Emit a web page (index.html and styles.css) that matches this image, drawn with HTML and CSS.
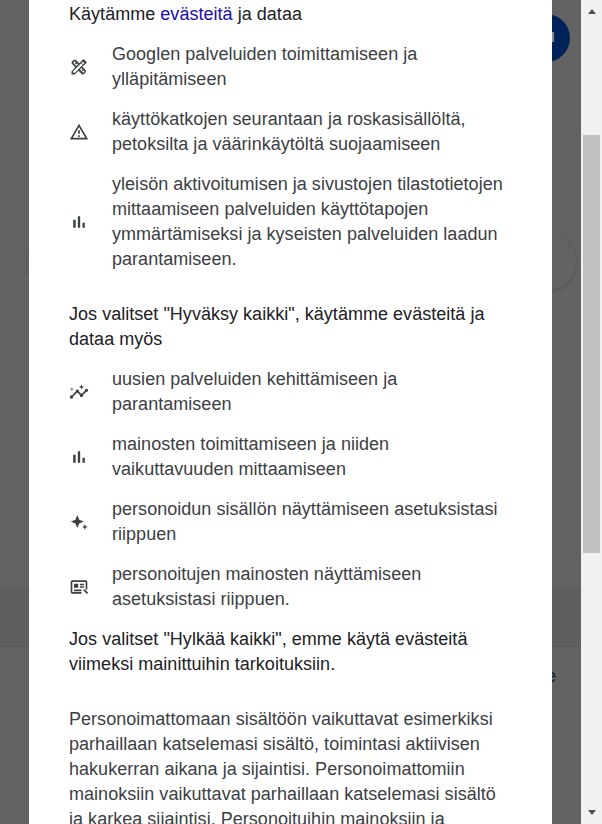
FILE: index.html
```html
<!DOCTYPE html>
<html lang="fi">
<head>
<meta charset="utf-8">
<title>Evästeet</title>
<link rel="stylesheet" href="styles.css">
</head>
<body>
<div class="page">
  <div class="backdrop">
    <div class="under">
      <div class="account"><span class="notch"></span></div>
      <div class="search"></div>
      <div class="band"></div>
      <div class="rule"></div>
      <span class="stray">e</span>
    </div>
    <main class="dialog">
      <p class="lead">Käytämme <a class="link" href="#">evästeitä</a> ja dataa</p>
      <ul class="list">
        <li class="item">
          <svg class="icon" viewBox="0 0 24 24"><path d="M20.97 7.27a1 1 0 0 0 0-1.41l-2.83-2.83a1 1 0 0 0-1.41 0l-4.49 4.49-3.89-3.89a2 2 0 0 0-2.83 0l-1.9 1.9a2 2 0 0 0 0 2.83l3.89 3.89L3 17.25V21h3.75l4.51-4.51 3.89 3.89c.95.95 2.23.6 2.83 0l1.9-1.9a2 2 0 0 0 0-2.83l-3.89-3.89zM5.04 6.94l1.89-1.9L8.2 6.31 7.02 7.5l1.41 1.41 1.19-1.19 1.2 1.2-1.9 1.9zm11.23 7.44-1.19 1.19 1.41 1.41 1.19-1.19 1.27 1.27-1.9 1.9-3.89-3.89 1.9-1.9zM6.92 19H5v-1.92l9.61-9.61 1.92 1.92zm9.61-13.57 1.92 1.92-1.41 1.41-1.92-1.92z"/></svg>
          <span>Googlen palveluiden toimittamiseen ja ylläpitämiseen</span>
        </li>
        <li class="item">
          <svg class="icon" viewBox="0 0 24 24"><path d="M12 5.99 19.53 19H4.47zM12 2 1 21h22zm1 14h-2v2h2zm0-6h-2v4h2z"/></svg>
          <span>käyttökatkojen seurantaan ja roskasisällöltä, petoksilta ja väärinkäytöltä suojaamiseen</span>
        </li>
        <li class="item">
          <svg class="icon" viewBox="0 0 24 24"><path d="M5 9.2h3V19H5zM10.6 5h2.8v14h-2.8zm5.6 8H19v6h-2.8z"/></svg>
          <span>yleisön aktivoitumisen ja sivustojen tilastotietojen mittaamiseen palveluiden käyttötapojen ymmärtämiseksi ja kyseisten palveluiden laadun parantamiseen.</span>
        </li>
      </ul>
      <p class="lead lead-gap">Jos valitset "Hyväksy kaikki", käytämme evästeitä ja dataa myös</p>
      <ul class="list">
        <li class="item">
          <svg class="icon" viewBox="0 0 24 24"><path d="M21 8c-1.45 0-2.26 1.44-1.93 2.51l-3.55 3.56c-.3-.09-.74-.09-1.04 0l-2.55-2.55C12.27 10.45 11.46 9 10 9c-1.45 0-2.27 1.44-1.93 2.52l-4.56 4.55C2.44 15.74 1 16.55 1 18c0 1.1.9 2 2 2 1.45 0 2.26-1.44 1.93-2.51l4.55-4.56c.3.09.74.09 1.04 0l2.55 2.55C12.73 16.55 13.54 18 15 18c1.45 0 2.27-1.44 1.93-2.52l3.56-3.55c1.07.33 2.51-.48 2.51-1.93 0-1.1-.9-2-2-2zM15 9l.94-2.07L18 6l-2.06-.93L15 3l-.92 2.07L12 6l2.08.93zM3.5 11 4 9l2-.5L4 8l-.5-2L3 8l-2 .5L3 9z"/></svg>
          <span>uusien palveluiden kehittämiseen ja parantamiseen</span>
        </li>
        <li class="item">
          <svg class="icon" viewBox="0 0 24 24"><path d="M5 9.2h3V19H5zM10.6 5h2.8v14h-2.8zm5.6 8H19v6h-2.8z"/></svg>
          <span>mainosten toimittamiseen ja niiden vaikuttavuuden mittaamiseen</span>
        </li>
        <li class="item">
          <svg class="icon" viewBox="0 0 24 24"><path d="m10 3.700 2.300 5.500 5.500 2.300-5.500 2.300-2.300 5.500-2.300-5.500-5.500-2.300 5.500-2.300zM19 14.500l1 2.500 2.500 1-2.500 1-1 2.500-1-2.500-2.500-1 2.500-1z"/></svg>
          <span>personoidun sisällön näyttämiseen asetuksistasi riippuen</span>
        </li>
        <li class="item">
          <svg class="icon" viewBox="0 0 24 24"><path d="M4 4h16a2 2 0 0 1 2 2v9h-2V6H4v12h11v2H4a2 2 0 0 1-2-2V6a2 2 0 0 1 2-2zm2 4h5v5H6zm7 0h5v2h-5zm0 3h5v2h-5zm-7 4h9v2H6zm12.500-.5 4.500 4.500-1.500 1.500-4.500-4.500z"/></svg>
          <span>personoitujen mainosten näyttämiseen asetuksistasi riippuen.</span>
        </li>
      </ul>
      <p class="lead">Jos valitset "Hylkää kaikki", emme käytä evästeitä viimeksi mainittuihin tarkoituksiin.</p>
      <p class="body">Personoimattomaan sisältöön vaikuttavat esimerkiksi parhaillaan katselemasi sisältö, toimintasi aktiivisen hakukerran aikana ja sijaintisi. Personoimattomiin mainoksiin vaikuttavat parhaillaan katselemasi sisältö ja karkea sijaintisi. Personoituihin mainoksiin ja sisältöön voivat vaikuttaa myös aiempi toimintasi.</p>
    </main>
  </div>
  <div class="scrollbar">
    <span class="arrow arrow-up"></span>
    <div class="track"><div class="thumb"></div></div>
    <span class="arrow arrow-down"></span>
  </div>
</div>
</body>
</html>
```
FILE: styles.css
```css
* { box-sizing: border-box; }
html, body { margin: 0; height: 100%; overflow: hidden; }
body { font-family: "Liberation Sans", Arial, sans-serif; }

.page { display: flex; height: 824px; width: 602px; }

.backdrop {
  position: relative;
  flex: 1;
  height: 824px;
  overflow: hidden;
  background: #636363;
}

.under { position: absolute; inset: 0; }
.account {
  position: absolute;
  left: 522px;
  top: 14px;
  width: 48px;
  height: 48px;
  border-radius: 50%;
  background: #00245a;
}
.notch {
  position: absolute;
  left: 30px;
  top: 18px;
  width: 2px;
  height: 10px;
  background: #8a8a8a;
}
.search {
  position: absolute;
  left: 27px;
  top: 234px;
  width: 549px;
  height: 56px;
  border-radius: 28px;
  background: #636363;
  box-shadow: 0 1px 4px rgba(0, 0, 0, 0.18);
}
.band {
  position: absolute;
  left: 0;
  right: 0;
  top: 587px;
  height: 59px;
  background: #5f5f5f;
}
.rule {
  position: absolute;
  left: 0;
  right: 0;
  top: 646px;
  height: 1px;
  background: #575757;
}
.stray {
  position: absolute;
  left: 546px;
  top: 666px;
  font-size: 18px;
  line-height: 20px;
  color: #10202f;
}

.dialog {
  position: relative;
  width: 523px;
  height: 824px;
  margin-left: 29px;
  padding: 2px 41px 0 40px;
  overflow: hidden;
  background: #fff;
  font-size: 18px;
  line-height: 25px;
  letter-spacing: 0.03px;
  color: #3c4043;
}

.lead { margin: 0; color: #202124; }
.lead-gap { margin-top: 30px; }
.link { color: #1a0dab; text-decoration: none; }

.list { list-style: none; margin: 15px 0; padding: 0; display: flex; flex-direction: column; gap: 15px; }
.item { display: flex; align-items: center; gap: 23px; }
.icon { flex: none; width: 20px; height: 20px; fill: #3c4043; }

.body { margin: 30px 0 0; }

.scrollbar {
  flex: none;
  width: 21px;
  height: 824px;
  display: flex;
  flex-direction: column;
  align-items: center;
  background: #f1f1f1;
}
.track { flex: 1; width: 17px; padding-top: 118px; padding-bottom: 254px; }
.thumb { height: 100%; background: #c1c1c1; }
.arrow { flex: none; width: 0; height: 0; border-left: 4.500px solid transparent; border-right: 4.500px solid transparent; }
.arrow-up { margin-top: 9px; margin-bottom: 3px; border-bottom: 5px solid #505050; }
.arrow-down { margin-top: 3px; margin-bottom: 9px; border-top: 5px solid #505050; }
```
